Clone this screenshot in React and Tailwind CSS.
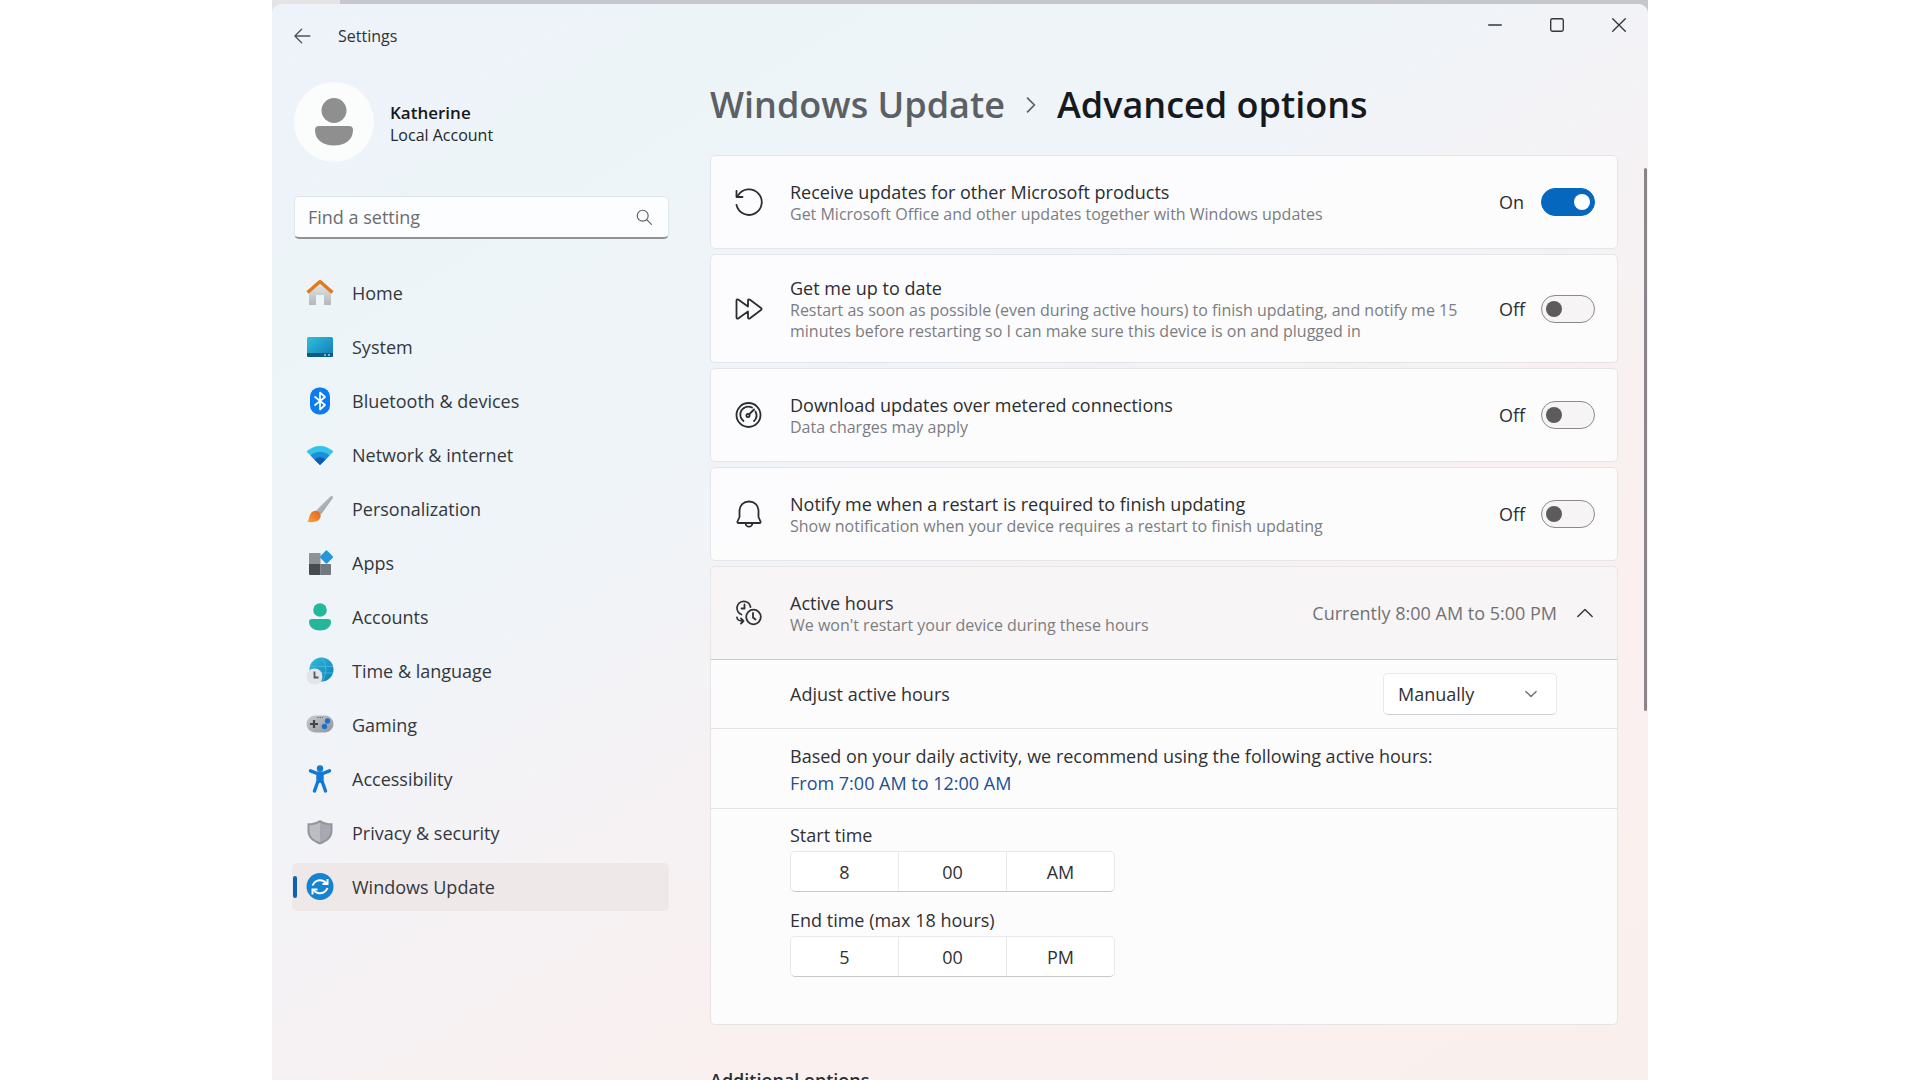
import { useState } from "react";

const NAV_ITEMS = [
    "Home",
    "System",
    "Bluetooth & devices",
    "Network & internet",
    "Personalization",
    "Apps",
    "Accounts",
    "Time & language",
    "Gaming",
    "Accessibility",
    "Privacy & security",
    "Windows Update",
];

const NAV_ICONS = {
    Home: (
        <>
            <path d="M3 12 14 3l11 9v14h-7V16h-8v10H3z" fill="url(#silver)" />
            <path d="M1.5 13.5 14 2.5l12.500 11" fill="none" stroke="#e27a1c" strokeWidth="3.4" strokeLinejoin="round" />
        </>
    ),
    System: (
        <>
            <rect x="1" y="4" width="26" height="20" rx="1.500" fill="url(#teal)" />
            <path d="M1 20h26v2.500a1.500 1.500 0 0 1-1.500 1.500h-23A1.500 1.500 0 0 1 1 22.500z" fill="#0c5a80" />
            <path d="M18 22h2m2 0h2" stroke="#9fd8e6" strokeWidth="1.500" />
        </>
    ),
    "Bluetooth & devices": (
        <>
            <rect x="4" y="0.500" width="20" height="27" rx="9" fill="#0a7cf0" />
            <path d="M8.500 9.500 19 18l-5 4.500v-17L19 10 8.500 18.500" fill="none" stroke="#fff" strokeWidth="1.700" strokeLinejoin="round" />
        </>
    ),
    "Network & internet": (
        <>
            <path d="M.5 10.500C8 3 20 3 27.500 10.500L14 24z" fill="#35c3ec" />
            <path d="M4.500 14.500c5.500-5 13.500-5 19 0L14 24z" fill="#1b8fdb" />
            <path d="M8.500 18.500c3.500-3 7.500-3 11 0L14 24z" fill="#0c5cb0" />
        </>
    ),
    Personalization: (
        <>
            <path d="M10.500 15 24.500 1.500c1.800-1.300 3 .2 2.200 1.800L15 19.500z" fill="url(#steel)" />
            <path d="M1 26.500c2.500-1.500 1.500-4 3.500-7.500 2-3.400 6.500-4.300 9-1.500 2.500 3 1 7-2.500 8.600-3 1.300-7 1.300-10 .4z" fill="url(#orange)" />
        </>
    ),
    Apps: (
        <>
            <path d="M4 4h10.500v11H3V5a1 1 0 0 1 1-1z" fill="#8d9296" />
            <path d="M3 15h11.500v11H4a1 1 0 0 1-1-1z" fill="#454b50" />
            <path d="M14.500 15H25v10a1 1 0 0 1-1 1h-9.500z" fill="#73797e" />
            <rect x="15.500" y="3" width="10" height="10" rx="1.200" transform="rotate(45 20.500 8)" fill="#2497dc" />
        </>
    ),
    Accounts: (
        <>
            <circle cx="14" cy="7" r="6.800" fill="#25b79a" />
            <path d="M6 16h16a3 3 0 0 1 3 3c0 5-5 8.500-11 8.500S3 24 3 19a3 3 0 0 1 3-3z" fill="#25b79a" />
        </>
    ),
    "Time & language": (
        <>
            <circle cx="15.500" cy="12.500" r="12" fill="url(#teal)" />
            <path d="M4 9.500h23M5 16h22M16 .5c5 6 5 18 0 24" fill="none" stroke="#45b8de" strokeWidth="0.900" />
            <circle cx="8.500" cy="19.500" r="8" fill="#e4e5e8" />
            <path d="M8.500 14.500v6h4" fill="none" stroke="#55595e" strokeWidth="1.800" />
        </>
    ),
    Gaming: (
        <>
            <rect x="0.500" y="4.500" width="27" height="17" rx="8.500" fill="url(#steel)" />
            <path d="M8 9v8m-4-4h8" stroke="#42474c" strokeWidth="2.200" />
            <circle cx="21.500" cy="10" r="2.700" fill="#1c6fd0" />
            <circle cx="18.500" cy="15.500" r="2.700" fill="#1c6fd0" />
            <path d="M11 6.500h6" stroke="#696e75" strokeWidth="1.200" strokeDasharray="1.500 1" />
        </>
    ),
    Accessibility: (
        <>
            <circle cx="14" cy="3.500" r="3.200" fill="#137ad1" />
            <path d="M4.500 5.800 11 8.300h6l6.500-2.500M12 9v7l-3.500 10M16 9v7l3.500 10" fill="none" stroke="#137ad1" strokeWidth="3.400" strokeLinecap="round" strokeLinejoin="round" />
            <path d="M11 8h6v10h-6z" fill="#137ad1" />
        </>
    ),
    "Privacy & security": (
        <>
            <path d="M14 1c3.500 2.500 7.500 3.300 12.500 3.300V12c0 6.500-5 10.700-12.500 13.500C6.500 22.700 1.500 18.500 1.500 12V4.300C6.500 4.300 10.500 3.500 14 1z" fill="#92969c" />
            <path d="M14 3.500c3.300 2 6.500 2.700 10.500 2.800V12c0 5-3.500 8.700-10.500 11.300z" fill="#a6a9b0" />
            <path d="M14 3.500c-3.300 2-6.500 2.700-10.500 2.800V12c0 5 3.500 8.700 10.500 11.300z" fill="#bbbdc3" />
        </>
    ),
    "Windows Update": (
        <>
            <circle cx="14" cy="13.500" r="13.500" fill="#1583cf" />
            <path d="M6.500 12.500C8 8.500 12 6.500 16 7.500c2 .5 3.500 1.600 4.500 3M21.500 15c-1.500 4-5.500 6-9.500 5-2-.5-3.500-1.600-4.500-3" fill="none" stroke="#fff" strokeWidth="2" />
            <path d="M21.500 6v5h-5M6.500 21.500v-5h5" fill="none" stroke="#fff" strokeWidth="2" />
        </>
    ),
};

const OPTIONS = [
    {
        id: "products",
        title: "Receive updates for other Microsoft products",
        detail: "Get Microsoft Office and other updates together with Windows updates",
        height: "min-h-[94px]",
        icon: (
            <>
                <path d="M3 7.500A12.800 12.800 0 1 1 1.500 17" />
                <path d="M1.500 3v6h6" />
            </>
        ),
    },
    {
        id: "uptodate",
        title: "Get me up to date",
        detail: "Restart as soon as possible (even during active hours) to finish updating, and notify me 15 minutes before restarting so I can make sure this device is on and plugged in",
        height: "min-h-[109px]",
        icon: (
            <path d="M1.500 5.500v17c0 1.200 1 1.500 2 .8L13 16.500v6c0 1.200 1 1.500 2 .8l11-8.300c.8-.6.8-1.400 0-2L15 4.700c-1-.7-2-.4-2 .8v6L3.500 4.700c-1-.7-2-.4-2 .8z" />
        ),
    },
    {
        id: "metered",
        title: "Download updates over metered connections",
        detail: "Data charges may apply",
        height: "min-h-[94px]",
        icon: (
            <>
                <circle cx="13.500" cy="14" r="12" />
                <path d="M8.500 20a8 8 0 0 1 8.500-13.500M20.500 10.500a8 8 0 0 1-1.500 9.500" />
                <circle cx="13" cy="14.500" r="1.600" />
                <path d="m14.500 13 4.500-4.500" />
            </>
        ),
    },
    {
        id: "notify",
        title: "Notify me when a restart is required to finish updating",
        detail: "Show notification when your device requires a restart to finish updating",
        height: "min-h-[94px]",
        icon: (
            <>
                <path d="M14 1.500c-5.500 0-9.500 4-9.500 9.500v6L2.500 21.500c-.3.800 0 1.500 1 1.500h21c1 0 1.300-.7 1-1.500L23.500 17v-6c0-5.500-4-9.500-9.500-9.500z" />
                <path d="M10.500 23c.3 2.300 1.700 3.700 3.500 3.700s3.200-1.400 3.500-3.700" />
            </>
        ),
    },
];

const LineIcon = ({ children, className = "size-7" }) => (
    <svg
        viewBox="0 0 28 28"
        className={`${className} shrink-0`}
        fill="none"
        stroke="currentColor"
        strokeWidth="1.800"
        strokeLinecap="round"
        strokeLinejoin="round"
        aria-hidden="true"
    >
        {children}
    </svg>
);

const IconGradients = () => (
    <svg className="absolute size-0" aria-hidden="true">
        <defs>
            <linearGradient id="silver" x1="0" y1="0" x2="0" y2="1">
                <stop offset="0" stopColor="#e9e9ea" />
                <stop offset="1" stopColor="#b4b6b9" />
            </linearGradient>
            <linearGradient id="steel" x1="0" y1="0" x2="1" y2="1">
                <stop offset="0" stopColor="#c9ccd1" />
                <stop offset="1" stopColor="#8f949b" />
            </linearGradient>
            <linearGradient id="teal" x1="0" y1="0" x2="1" y2="1">
                <stop offset="0" stopColor="#2fc0da" />
                <stop offset="1" stopColor="#1279b5" />
            </linearGradient>
            <linearGradient id="orange" x1="1" y1="0" x2="0" y2="1">
                <stop offset="0" stopColor="#e0621f" />
                <stop offset="1" stopColor="#fba43c" />
            </linearGradient>
        </defs>
    </svg>
);

const TitleBar = () => (
    <header className="flex h-[58px] items-start justify-between">
        <div className="flex items-center gap-[26px] pt-5 pl-5">
            <button type="button" aria-label="Back" className="flex h-6 items-center text-[#50555a]">
                <LineIcon className="size-5">
                    <path d="M25 14H4m9.500-9.500L4 14l9.500 9.500" />
                </LineIcon>
            </button>
            <h1 className="text-[16px] leading-6 text-[#2d3237]">Settings</h1>
        </div>
        <div className="flex gap-1 text-[#33373c]">
            <button type="button" aria-label="Minimize" className="flex h-[42px] w-[58px] items-center justify-center">
                <LineIcon className="size-4">
                    <path d="M3 14h22" strokeWidth="2.400" />
                </LineIcon>
            </button>
            <button type="button" aria-label="Maximize" className="flex h-[42px] w-[58px] items-center justify-center">
                <LineIcon className="size-4">
                    <rect x="3" y="3" width="22" height="22" rx="3" strokeWidth="2.400" />
                </LineIcon>
            </button>
            <button type="button" aria-label="Close" className="flex h-[42px] w-[58px] items-center justify-center">
                <LineIcon className="size-4">
                    <path d="m3 3 22 22M25 3 3 25" strokeWidth="2.400" />
                </LineIcon>
            </button>
        </div>
    </header>
);

const Sidebar = ({ selected, setSelected }) => (
    <aside className="w-[377px] shrink-0 pt-5">
        <div className="ml-0.5 flex items-center gap-4">
            <div className="flex size-20 items-center justify-center rounded-full bg-[#fbfcfc]">
                <svg viewBox="0 0 40 48" className="h-12 w-10" fill="#8f8f8f" aria-hidden="true">
                    <circle cx="20" cy="12.500" r="12.500" />
                    <path d="M5 28h30a4 4 0 0 1 4 4c0 10-8 15.500-19 15.500S1 42 1 32a4 4 0 0 1 4-4z" />
                </svg>
            </div>
            <div className="pt-0.5">
                <p className="text-[17px] leading-6 font-semibold text-[#14181c]">Katherine</p>
                <p className="text-[16px] leading-[21px] text-[#22272c]">Local Account</p>
            </div>
        </div>

        <label className="mt-[34px] ml-0.5 flex h-[43px] items-center rounded-[5px] border border-b-2 border-[#e0e5e9] border-b-[#8f9396] bg-[#fcfdfe] pr-[15px] pl-[13px]">
            <input
                type="search"
                aria-label="Find a setting"
                placeholder="Find a setting"
                className="min-w-0 flex-1 bg-transparent text-[18px] leading-6 outline-none placeholder:text-[#6a6d70]"
            />
            <LineIcon className="size-[18px] text-[#5a5e62]">
                <circle cx="12" cy="12" r="8.500" />
                <path d="m18.500 18.500 7 7" />
            </LineIcon>
        </label>

        <nav className="mt-[30px] flex flex-col gap-1.5">
            {NAV_ITEMS.map((item) => (
                <a
                    key={item}
                    href="#"
                    onClick={() => setSelected(item)}
                    aria-current={selected === item ? "page" : undefined}
                    className={`relative flex h-12 items-center gap-[18px] rounded-[5px] pl-3.5 text-[18px] leading-6 text-[#33383d] ${
                        selected === item ? "bg-[#eee8e9]" : ""
                    }`}
                >
                    {selected === item && (
                        <span className="absolute top-[13px] left-px h-[22px] w-1 rounded-full bg-[#0a63b8]" />
                    )}
                    <svg viewBox="0 0 28 28" className="size-7" aria-hidden="true">
                        {NAV_ICONS[item]}
                    </svg>
                    {item}
                </a>
            ))}
        </nav>
    </aside>
);

const OptionCard = ({ option, checked, onChange }) => (
    <section
        className={`${option.height} flex items-center rounded-[5px] border border-[#e4e5e9] bg-[#fdfdfe]/90 pr-[22px] pl-6 text-[#2b2e31]`}
    >
        <LineIcon>{option.icon}</LineIcon>
        <div className="ml-[27px] max-w-[690px] flex-1">
            <h3 className="text-[18px] leading-6">{option.title}</h3>
            <p className="text-[16px] leading-[21px] text-[#7b7d80]">{option.detail}</p>
        </div>
        <label className="ml-auto flex items-center">
            <span className="w-[42px] text-[18px] leading-6">{checked ? "On" : "Off"}</span>
            <input
                type="checkbox"
                role="switch"
                aria-label={option.title}
                checked={checked}
                onChange={onChange}
                className="flex h-7 w-[54px] appearance-none items-center rounded-full border border-[#8b8989] bg-[#f6f4f5] px-1 before:size-4 before:rounded-full before:bg-[#5d5b5c] before:content-[''] checked:justify-end checked:border-[#0567be] checked:bg-[#0567be] checked:before:bg-white"
            />
        </label>
    </section>
);

const TimeField = ({ label, values }) => (
    <fieldset>
        <legend className="text-[18px] leading-6">{label}</legend>
        <div className="mt-1 flex h-[41px] w-[325px] divide-x divide-[#e9e8ea] overflow-hidden rounded-[5px] border border-[#e9e8ea] border-b-[#c9c9cb] bg-white">
            {values.map((value, i) => (
                <input
                    key={i}
                    type="text"
                    aria-label={`${label} ${["hour", "minute", "period"][i]}`}
                    defaultValue={value}
                    className="w-0 flex-1 text-center text-[18px] leading-6 outline-none"
                />
            ))}
        </div>
    </fieldset>
);

const ActiveHours = () => {
    const [open, setOpen] = useState(true);

    return (
        <section className="text-[#2f3134]">
            <button
                type="button"
                aria-expanded={open}
                onClick={() => setOpen(!open)}
                className="flex h-[94px] w-full items-center rounded-t-[5px] border border-[#e8e3e5] border-b-[#cfcbcc] bg-[#f8f5f6] pr-6 pl-6 text-left"
            >
                <LineIcon>
                    <path d="M6.500 15.500A6.800 6.800 0 1 1 15.500 8" />
                    <path d="M9.500 5.500v4H6.500" />
                    <circle cx="18.500" cy="18" r="7.300" />
                    <path d="M18 14v4.500l2.500 2" />
                    <path d="M2 18.500c.3 2.500 1.500 3.500 6.500 3.500M6 19.500 8.500 22 6 24.500" />
                </LineIcon>
                <span className="ml-[27px] flex-1">
                    <span className="block text-[18px] leading-6">Active hours</span>
                    <span className="block text-[16px] leading-[21px] text-[#7b7d80]">
                        We won't restart your device during these hours
                    </span>
                </span>
                <span className="text-[18px] leading-6 text-[#717274]">Currently 8:00 AM to 5:00 PM</span>
                <LineIcon className="ml-5 size-4">
                    <path d="M1.500 20 14 8l12.500 12" strokeWidth="2.400" />
                </LineIcon>
            </button>
            {open && (
                <div className="divide-y divide-[#e5e3e5] rounded-b-[5px] border border-t-0 border-[#e5e3e5] bg-[#fdfcfd]">
                    <div className="flex h-[69px] items-center justify-between pr-[60px] pl-[79px]">
                        <label htmlFor="adjust" className="text-[18px] leading-6">
                            Adjust active hours
                        </label>
                        <div className="relative">
                            <select
                                id="adjust"
                                className="h-[42px] w-[174px] appearance-none rounded-[5px] border border-[#e9e8ea] border-b-[#d0d0d2] bg-white px-3.5 text-[18px] leading-6 outline-none"
                            >
                                <option>Manually</option>
                                <option>Automatically</option>
                            </select>
                            <LineIcon className="pointer-events-none absolute top-[15px] right-5 size-3 text-[#6b6d70]">
                                <path d="M2 8l12 12L26 8" strokeWidth="3" />
                            </LineIcon>
                        </div>
                    </div>
                    <div className="h-[80px] pt-3.5 pl-[79px] text-[18px] leading-[27px]">
                        <p>Based on your daily activity, we recommend using the following active hours:</p>
                        <a href="#" className="text-[#1f4f94]">
                            From 7:00 AM to 12:00 AM
                        </a>
                    </div>
                    <div className="flex h-[215px] flex-col gap-4 pt-3.5 pl-[79px]">
                        <TimeField label="Start time" values={["8", "00", "AM"]} />
                        <TimeField label="End time (max 18 hours)" values={["5", "00", "PM"]} />
                    </div>
                </div>
            )}
        </section>
    );
};

export default function App() {
    const [selected, setSelected] = useState("Windows Update");
    const [enabled, setEnabled] = useState({ products: true });

    const toggle = (id) => {
        setEnabled({ ...enabled, [id]: !enabled[id] });
    };

    return (
        <div className="h-screen overflow-hidden bg-white font-['Open_Sans','Noto_Sans',sans-serif]">
            <IconGradients />
            <div className="mx-auto flex h-full w-full max-w-[1376px] flex-col bg-[linear-gradient(90deg,#e4e4e6_68px,#c5c7cc_68px)]">
                <div className="mt-1 flex min-h-0 flex-1 flex-col overflow-hidden rounded-t-[9px] bg-[linear-gradient(148deg,#eff2fa_0%,#edf4f8_14%,#eff4f9_36%,#f5f2f4_52%,#f9f0f0_66%,#f9f0ee_100%)]">
                    <TitleBar />
                    <div className="flex min-h-0 flex-1 gap-[41px] pl-5">
                        <Sidebar selected={selected} setSelected={setSelected} />
                        <main className="min-w-0 flex-1 pt-5">
                            <h2 className="flex items-center text-[36px] leading-[46px] font-semibold text-[#16191d]">
                                <a href="#" className="text-[#5c6065]">
                                    Windows Update
                                </a>
                                <LineIcon className="mx-[18px] size-4 text-[#5c6065]">
                                    <path d="M8 2l12 12L8 26" strokeWidth="3" />
                                </LineIcon>
                                Advanced options
                            </h2>
                            <div className="mt-[27px] flex gap-[26px] pr-px">
                                <div className="flex flex-1 flex-col gap-[5px]">
                                    {OPTIONS.map((option) => (
                                        <OptionCard
                                            key={option.id}
                                            option={option}
                                            checked={!!enabled[option.id]}
                                            onChange={() => toggle(option.id)}
                                        />
                                    ))}
                                    <ActiveHours />
                                    <h3 className="mt-[38px] text-[18px] leading-6 font-semibold text-[#2b2e31]">
                                        Additional options
                                    </h3>
                                </div>
                                <div className="mt-[13px] h-[543px] w-[3px] rounded-full bg-[#8b8589]" />
                            </div>
                        </main>
                    </div>
                </div>
            </div>
        </div>
    );
}
